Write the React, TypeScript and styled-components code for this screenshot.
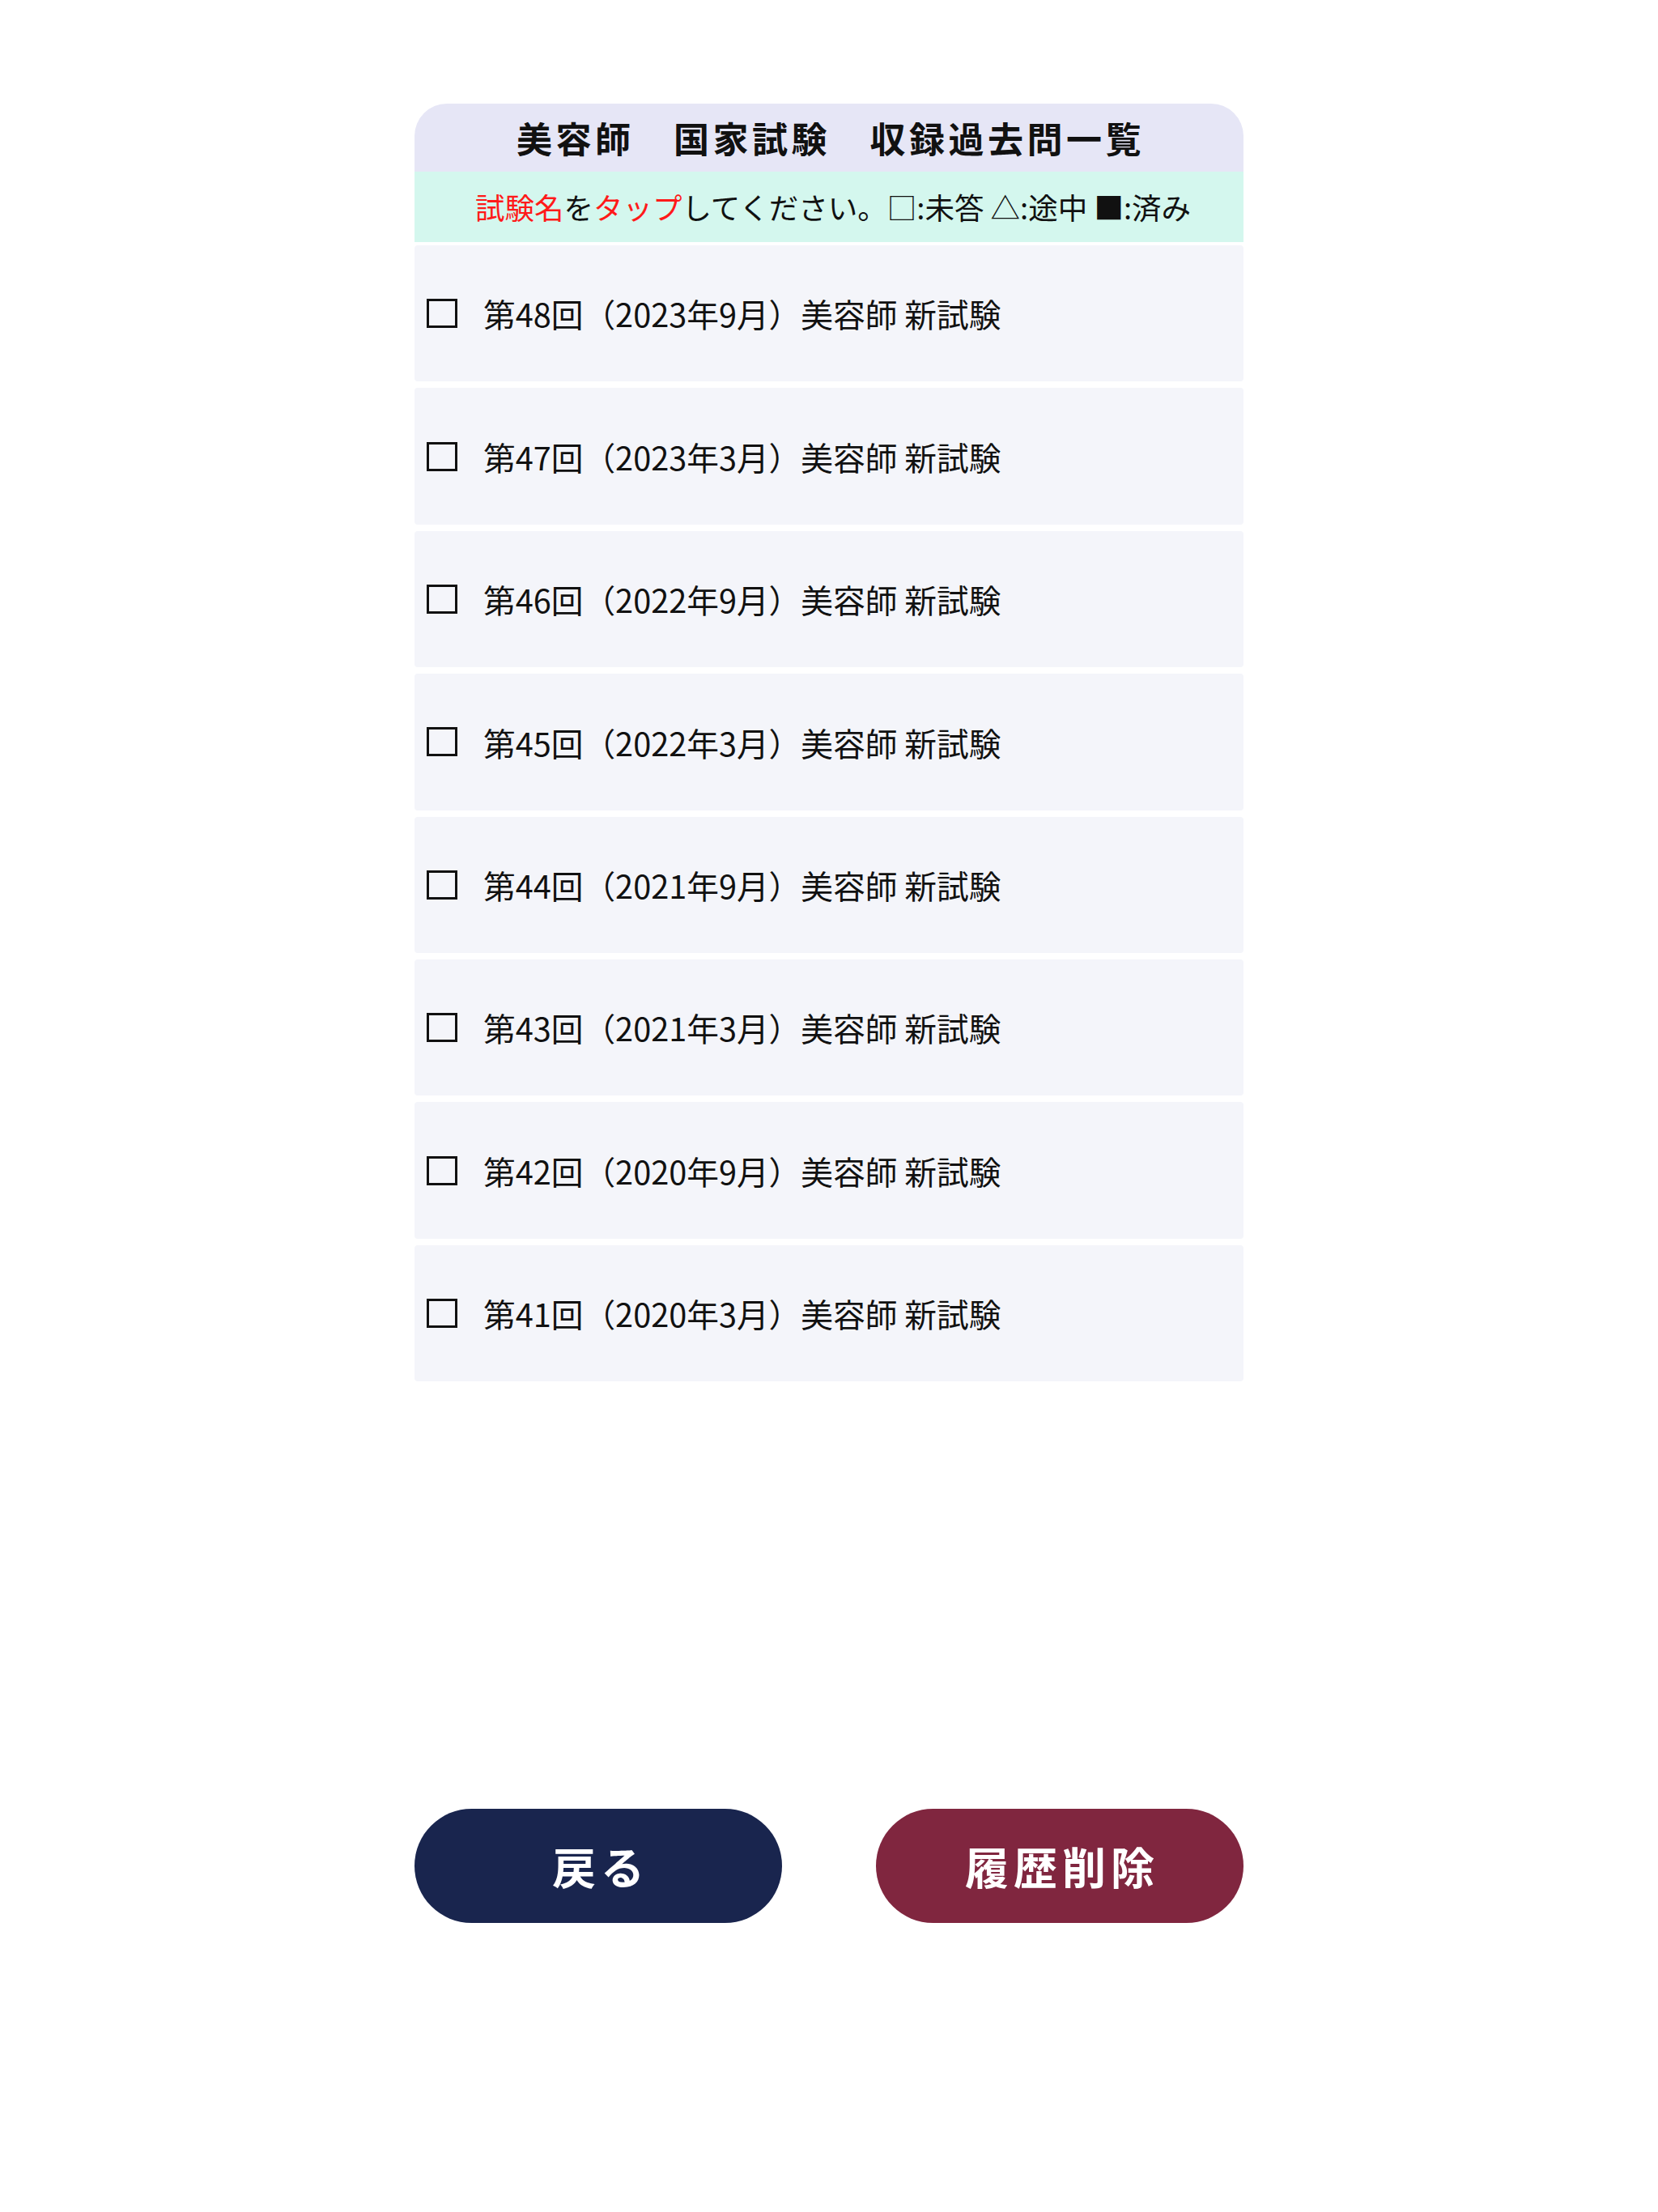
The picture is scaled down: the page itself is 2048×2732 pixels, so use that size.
import React from "react";
import styled, { createGlobalStyle } from "styled-components";

const GlobalStyle = createGlobalStyle`
  html, body {
    margin: 0;
    padding: 0;
    background: #ffffff;
  }
  body {
    font-family: "Noto Sans CJK JP", "Noto Sans", sans-serif;
    color: #111111;
  }
`;

const Page = styled.div`
  width: 1024px;
  margin: 0 auto;
  padding-top: 128px;
  padding-bottom: 356px;
  display: flex;
  flex-direction: column;
`;

const Card = styled.section`
  display: flex;
  flex-direction: column;
`;

const TitleBar = styled.h1`
  margin: 0;
  height: 84px;
  background: #e6e6f6;
  border-radius: 40px 40px 0 0;
  display: flex;
  align-items: center;
  justify-content: center;
  font-size: 44px;
  font-weight: 700;
  letter-spacing: 4.5px;
  color: #111111;
  padding-left: 4px;
`;

const Hint = styled.p`
  margin: 0 0 4px;
  height: 87px;
  background: #d4f7ee;
  display: flex;
  align-items: center;
  justify-content: center;
  padding-left: 10px;
  font-size: 36.5px;
  font-weight: 400;
  color: #111111;
  white-space: pre;
`;

const Red = styled.span`
  color: #ff1a1a;
`;

const List = styled.ul`
  list-style: none;
  margin: 0;
  padding: 0;
  display: flex;
  flex-direction: column;
  gap: 8px;
`;

const Row = styled.li`
  height: 168.4px;
  background: #f4f5fa;
  border-radius: 4px;
  display: flex;
  align-items: center;
  padding-left: 15px;
  gap: 32px;
  cursor: pointer;
`;

const StatusBox = styled.span`
  width: 38px;
  height: 36px;
  box-sizing: border-box;
  border: 3px solid #111111;
  flex: none;
`;

const RowLabel = styled.span`
  font-size: 39.7px;
  color: #111111;
  line-height: 1;
  white-space: pre;
`;

const ButtonBar = styled.div`
  margin-top: 528px;
  display: flex;
  justify-content: space-between;
`;

const PillButton = styled.button<{ $bg: string }>`
  width: 454px;
  height: 141px;
  border: none;
  border-radius: 71px;
  background: ${(p) => p.$bg};
  color: #ffffff;
  font-family: "Noto Sans CJK JP", "Noto Sans", sans-serif;
  font-size: 54px;
  font-weight: 700;
  letter-spacing: 6px;
  padding: 0 0 0 6px;
  display: flex;
  align-items: center;
  justify-content: center;
  cursor: pointer;
`;

const exams = [
  { no: 48, year: 2023, month: 9 },
  { no: 47, year: 2023, month: 3 },
  { no: 46, year: 2022, month: 9 },
  { no: 45, year: 2022, month: 3 },
  { no: 44, year: 2021, month: 9 },
  { no: 43, year: 2021, month: 3 },
  { no: 42, year: 2020, month: 9 },
  { no: 41, year: 2020, month: 3 },
];

export default function App() {
  return (
    <>
      <GlobalStyle />
      <Page>
        <Card>
          <TitleBar>美容師　国家試験　収録過去問一覧</TitleBar>
          <Hint>
            <Red>試験名</Red>を<Red>タップ</Red>してください。□:未答 △:途中 ■:済み
          </Hint>
          <List>
            {exams.map((e) => (
              <Row key={e.no}>
                <StatusBox />
                <RowLabel>{`第${e.no}回（${e.year}年${e.month}月）美容師 新試験`}</RowLabel>
              </Row>
            ))}
          </List>
        </Card>
        <ButtonBar>
          <PillButton $bg="#19254e">戻る</PillButton>
          <PillButton $bg="#80263f">履歴削除</PillButton>
        </ButtonBar>
      </Page>
    </>
  );
}
